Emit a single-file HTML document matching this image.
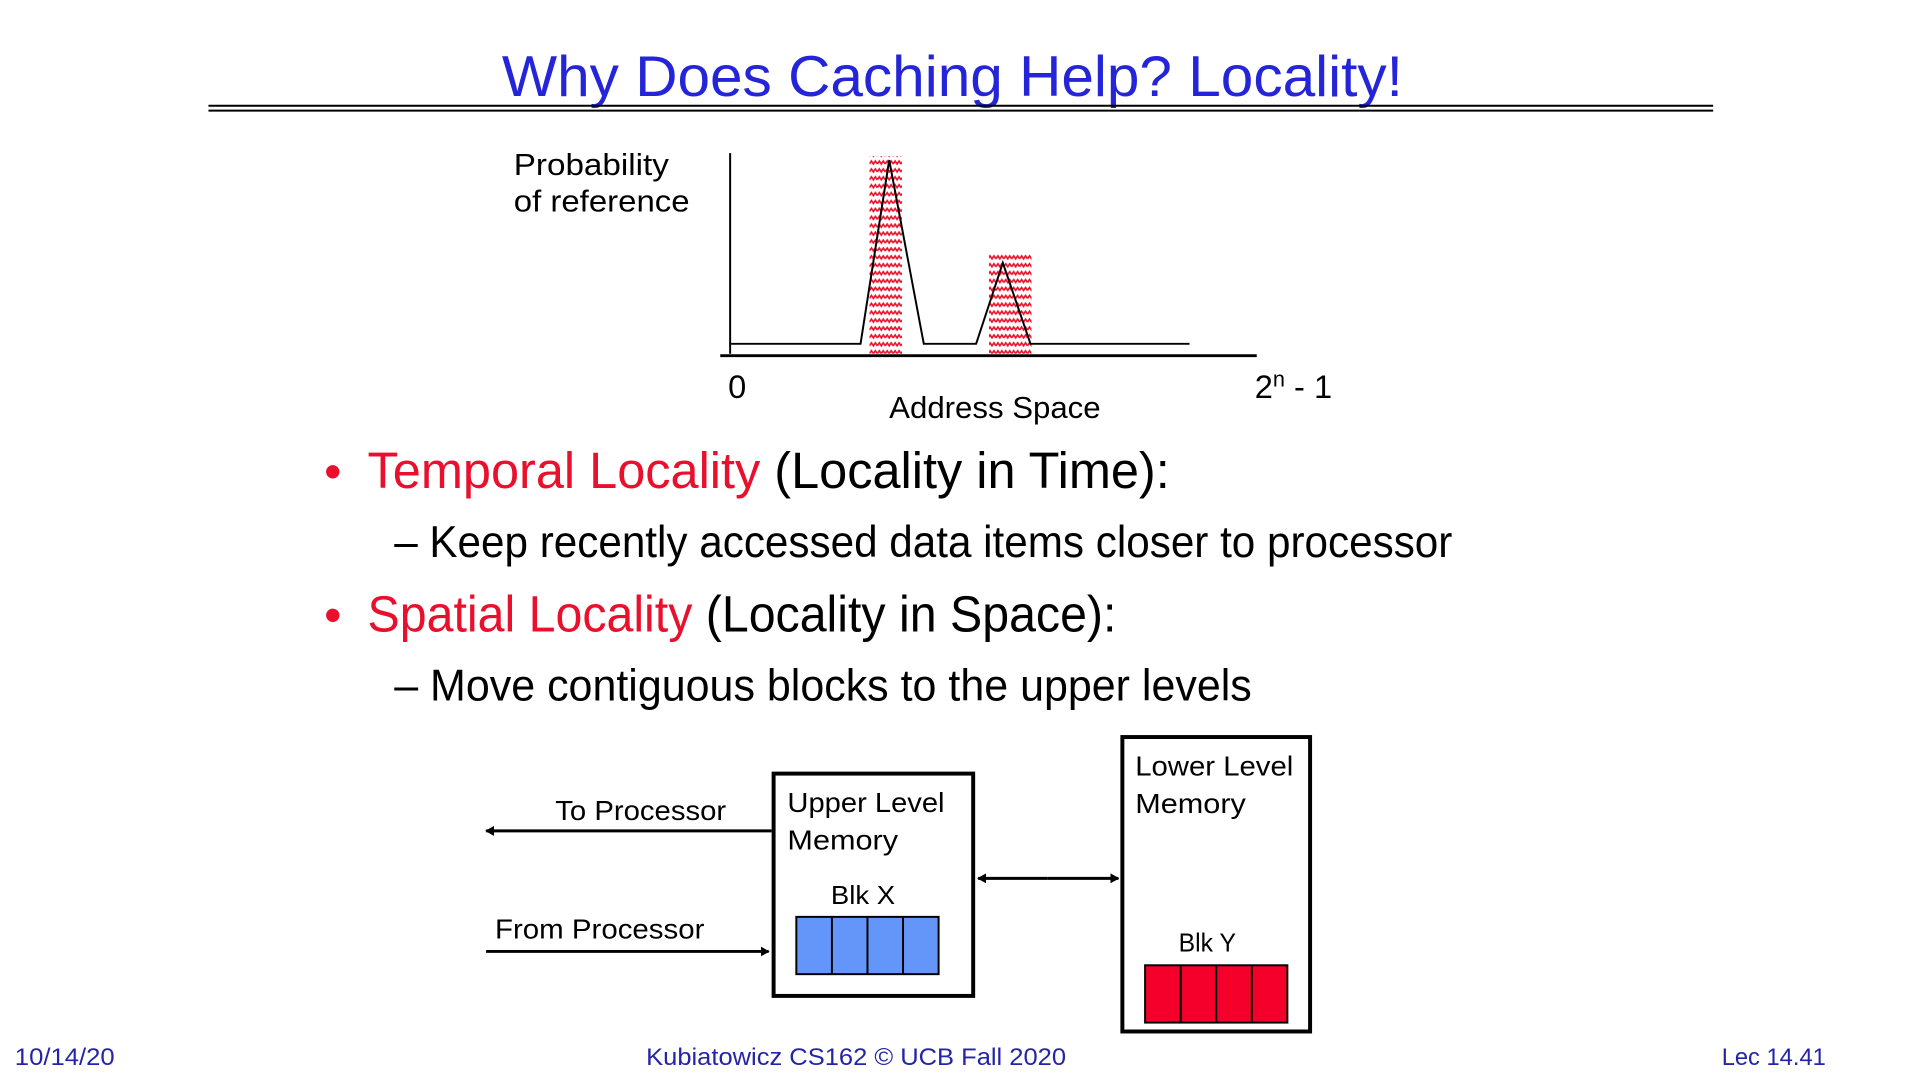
<!DOCTYPE html>
<html><head><meta charset="utf-8"><style>
html,body{margin:0;padding:0;background:#fff;}
svg{display:block;font-family:"Liberation Sans",sans-serif;}
</style></head><body>
<svg width="1920" height="1080" viewBox="0 0 1920 1080" xmlns="http://www.w3.org/2000/svg">
<defs>
<pattern id="zz" width="8" height="8" patternUnits="userSpaceOnUse">
<path d="M0 6 L2 3 L4 6 L6 3 L8 6" fill="none" stroke="#e8102c" stroke-width="1.6"/>
</pattern>
<marker id="ah" markerWidth="10" markerHeight="10" refX="8" refY="5" orient="auto" markerUnits="userSpaceOnUse">
<path d="M0 0 L9 5 L0 10 Z" fill="#000"/>
</marker>
</defs>
<g transform="scale(0.988)">
<text x="964" y="97" text-anchor="middle" font-size="58" fill="#2424d8" textLength="912" lengthAdjust="spacingAndGlyphs">Why Does Caching Help? Locality!</text>
<line x1="211" y1="107" x2="1734" y2="107" stroke="#000" stroke-width="2"/>
<line x1="211" y1="112" x2="1734" y2="112" stroke="#000" stroke-width="2"/>
<text x="520" y="177" font-size="31" textLength="157" lengthAdjust="spacingAndGlyphs">Probability</text>
<text x="520" y="214" font-size="31" textLength="178" lengthAdjust="spacingAndGlyphs">of reference</text>
<rect x="880" y="158" width="33" height="200" fill="url(#zz)"/>
<rect x="1001" y="256" width="43" height="102" fill="url(#zz)"/>
<line x1="739" y1="155" x2="739" y2="358" stroke="#000" stroke-width="2"/>
<line x1="729" y1="360" x2="1272" y2="360" stroke="#000" stroke-width="3"/>
<polyline points="740,348 871,348 900,162 935,348 939,348 988,348 1015,266 1043,348 1204,348" fill="none" stroke="#000" stroke-width="2"/>
<text x="737" y="403" font-size="33">0</text>
<text x="1270" y="403" font-size="33">2<tspan font-size="22" dy="-12">n</tspan><tspan dy="12"> - 1</tspan></text>
<text x="900" y="423" font-size="31" textLength="214" lengthAdjust="spacingAndGlyphs">Address Space</text>
<text x="328" y="494" font-size="50" fill="#e8102c">•</text>
<text x="372" y="494" font-size="52" textLength="812" lengthAdjust="spacingAndGlyphs"><tspan fill="#e8102c">Temporal Locality</tspan> (Locality in Time):</text>
<text x="399" y="564" font-size="45" textLength="1071" lengthAdjust="spacingAndGlyphs">– Keep recently accessed data items closer to processor</text>
<text x="328" y="639" font-size="50" fill="#e8102c">•</text>
<text x="372" y="639" font-size="52" textLength="758" lengthAdjust="spacingAndGlyphs"><tspan fill="#e8102c">Spatial Locality</tspan> (Locality in Space):</text>
<text x="399" y="709" font-size="45" textLength="868" lengthAdjust="spacingAndGlyphs">– Move contiguous blocks to the upper levels</text>
<rect x="783" y="783" width="202" height="225" fill="none" stroke="#000" stroke-width="4"/>
<rect x="1136" y="746" width="190" height="298" fill="none" stroke="#000" stroke-width="4"/>
<g stroke="#000" stroke-width="2">
<rect x="806" y="928" width="144" height="58" fill="#6495f8"/>
<line x1="842" y1="928" x2="842" y2="986"/><line x1="878" y1="928" x2="878" y2="986"/><line x1="914" y1="928" x2="914" y2="986"/>
<rect x="1159" y="977" width="144" height="58" fill="#f5002a"/>
<line x1="1195" y1="977" x2="1195" y2="1035"/><line x1="1231" y1="977" x2="1231" y2="1035"/><line x1="1267" y1="977" x2="1267" y2="1035"/>
</g>
<line x1="781" y1="841" x2="492" y2="841" stroke="#000" stroke-width="3" marker-end="url(#ah)"/>
<line x1="492" y1="963" x2="778" y2="963" stroke="#000" stroke-width="3" marker-end="url(#ah)"/>
<line x1="1060" y1="889" x2="1132" y2="889" stroke="#000" stroke-width="3" marker-end="url(#ah)"/>
<line x1="1060" y1="889" x2="990" y2="889" stroke="#000" stroke-width="3" marker-end="url(#ah)"/>
<g font-size="28">
<text x="562" y="830" textLength="173" lengthAdjust="spacingAndGlyphs">To Processor</text>
<text x="501" y="950" textLength="212" lengthAdjust="spacingAndGlyphs">From Processor</text>
<text x="797" y="822" textLength="159" lengthAdjust="spacingAndGlyphs">Upper Level</text>
<text x="797" y="860" textLength="112" lengthAdjust="spacingAndGlyphs">Memory</text>
<text x="1149" y="785" textLength="160" lengthAdjust="spacingAndGlyphs">Lower Level</text>
<text x="1149" y="823" textLength="112" lengthAdjust="spacingAndGlyphs">Memory</text>
<text x="841" y="915" font-size="26" textLength="65" lengthAdjust="spacingAndGlyphs">Blk X</text>
<text x="1193" y="963" font-size="26" textLength="58" lengthAdjust="spacingAndGlyphs">Blk Y</text>
</g>
<g font-size="24" fill="#2424a8">
<text x="15" y="1078" textLength="101" lengthAdjust="spacingAndGlyphs">10/14/20</text>
<text x="654" y="1078" textLength="425" lengthAdjust="spacingAndGlyphs">Kubiatowicz CS162 © UCB Fall 2020</text>
<text x="1848" y="1078" text-anchor="end">Lec 14.41</text>
</g>
</g>
</svg>
</body></html>
